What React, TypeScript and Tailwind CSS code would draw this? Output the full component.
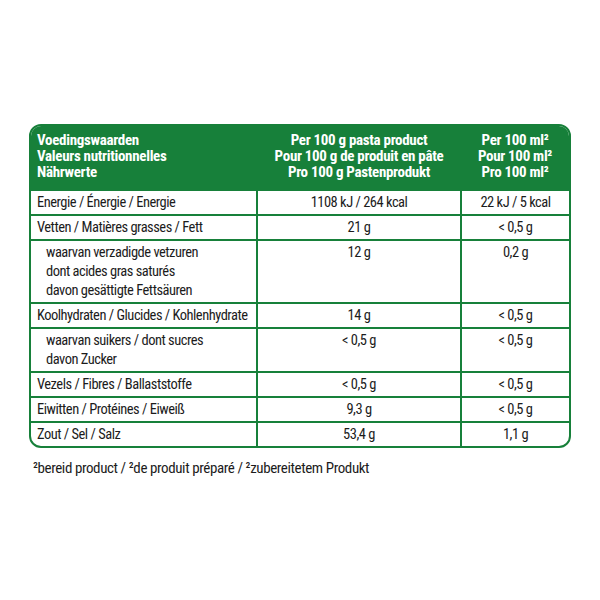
import React from 'react';

type Row = {
  label: string[];
  per100g: string;
  per100ml: string;
  sub?: boolean;
};

const rows: Row[] = [
  { label: ['Energie / Énergie / Energie'], per100g: '1108 kJ / 264 kcal', per100ml: '22 kJ / 5 kcal' },
  { label: ['Vetten / Matières grasses / Fett'], per100g: '21 g', per100ml: '< 0,5 g' },
  {
    label: ['waarvan verzadigde vetzuren', 'dont acides gras saturés', 'davon gesättigte Fettsäuren'],
    per100g: '12 g',
    per100ml: '0,2 g',
    sub: true,
  },
  { label: ['Koolhydraten / Glucides / Kohlenhydrate'], per100g: '14 g', per100ml: '< 0,5 g' },
  { label: ['waarvan suikers / dont sucres', 'davon Zucker'], per100g: '< 0,5 g', per100ml: '< 0,5 g', sub: true },
  { label: ['Vezels / Fibres / Ballaststoffe'], per100g: '< 0,5 g', per100ml: '< 0,5 g' },
  { label: ['Eiwitten / Protéines / Eiweiß'], per100g: '9,3 g', per100ml: '< 0,5 g' },
  { label: ['Zout / Sel / Salz'], per100g: '53,4 g', per100ml: '1,1 g' },
];

const font = {
  fontFamily: '"Roboto Condensed", "Liberation Sans Narrow", "DejaVu Sans Condensed", sans-serif',
};

export default function App() {
  return (
    <div className="w-[600px] h-[600px] bg-white pt-[124px]" style={font}>
      <div className="w-[542px] mx-auto rounded-[12px] border-2 border-[#17803a] overflow-hidden">
        <table className="w-full table-fixed border-collapse text-[14.5px] leading-[19px] tracking-[-0.5px] text-[#1c1c1c]">
          <colgroup>
            <col className="w-[226px]" />
            <col className="w-[204px]" />
            <col />
          </colgroup>
          <thead>
            {/* header block is solid green, three languages stacked */}
            <tr className="bg-[#17803a] text-white font-bold text-[15px] leading-[16px] tracking-[-0.3px]">
              <th className="text-left font-bold px-[6px] pt-[6px] pb-[9px] whitespace-nowrap">
                Voedingswaarden
                <br />
                Valeurs nutritionnelles
                <br />
                Nährwerte
              </th>
              <th className="text-center font-bold px-1 pt-[6px] pb-[9px] whitespace-nowrap">
                Per 100 g pasta product
                <br />
                Pour 100 g de produit en pâte
                <br />
                Pro 100 g Pastenprodukt
              </th>
              <th className="text-center font-bold px-1 pt-[6px] pb-[9px] whitespace-nowrap">
                Per 100 ml²
                <br />
                Pour 100 ml²
                <br />
                Pro 100 ml²
              </th>
            </tr>
          </thead>
          <tbody>
            {rows.map((r, i) => (
              <tr key={i} className="border-t-2 border-[#17803a] align-top">
                <td className={`${r.sub ? 'pl-[15px]' : 'pl-[6px]'} pr-1 pt-[2px] pb-[2px] whitespace-nowrap`}>
                  {r.label.map((l, j) => (
                    <div key={j}>{l}</div>
                  ))}
                </td>
                <td className="border-l-2 border-[#17803a] text-center pt-[2px] pb-[2px]">{r.per100g}</td>
                <td className="border-l-2 border-[#17803a] text-center pt-[2px] pb-[2px]">{r.per100ml}</td>
              </tr>
            ))}
          </tbody>
        </table>
      </div>
      <p className="w-[542px] mx-auto mt-[11px] pl-[4px] text-[15px] leading-[19px] tracking-[-0.4px] text-[#1c1c1c]">
        ²bereid product / ²de produit préparé / ²zubereitetem Produkt
      </p>
    </div>
  );
}
